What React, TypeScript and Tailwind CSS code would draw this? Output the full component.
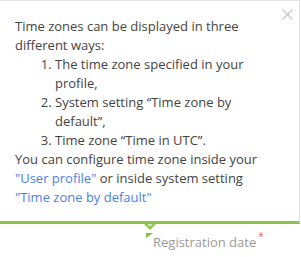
import React from "react";

export default function App() {
  return (
    <div className="relative w-[301px] h-[257px] bg-white overflow-hidden font-['Open_Sans',sans-serif]">
      <div className="relative w-[300px] bg-white border-t border-r border-[#e3e3e3] border-b-[3px] border-b-[#8bc34a] pt-[16px] pb-[14px] pl-[15px] pr-[30px] text-[13px] leading-[19px] text-[#444]">
        <svg className="absolute right-[6px] top-[8px]" width="11" height="11" viewBox="0 0 11 11">
          <path d="M0.5 0.5 L10.5 10.5 M10.5 0.5 L0.5 10.5" stroke="#c4c4c4" strokeWidth="1.2" fill="none" />
        </svg>
        <p>Time zones can be displayed in three different ways:</p>
        <ol className="list-decimal pl-[40px]">
          <li>The time zone specified in your profile,</li>
          <li>System setting “Time zone by default”,</li>
          <li>Time zone “Time in UTC”.</li>
        </ol>
        <p>
          You can configure time zone inside your{" "}
          <span className="text-[#4a7fe6]">"User profile"</span> or inside system setting{" "}
          <span className="text-[#4a7fe6]">"Time zone by default"</span>
        </p>
        <svg className="absolute left-[144px] bottom-[-9px]" width="12" height="6" viewBox="0 0 12 6">
          <path d="M0 0 L12 0 L6 6 Z" fill="#8bc34a" />
          <path d="M3 0 L9 0 L6 3 Z" fill="#cfe7b3" />
        </svg>
      </div>
      <div className="flex items-start pl-[146px] pt-[9px]">
        <svg width="7" height="5" viewBox="0 0 7 5">
          <path d="M0 0 L7 0 L0 5 Z" fill="#7ec540" />
        </svg>
        <span className="text-[13px] leading-[19px] text-[#9a9a9a]">Registration date</span>
        <span className="ml-[2px] text-[10px] leading-[10px] text-[#f0606a] mt-[-2px]">*</span>
      </div>
    </div>
  );
}
